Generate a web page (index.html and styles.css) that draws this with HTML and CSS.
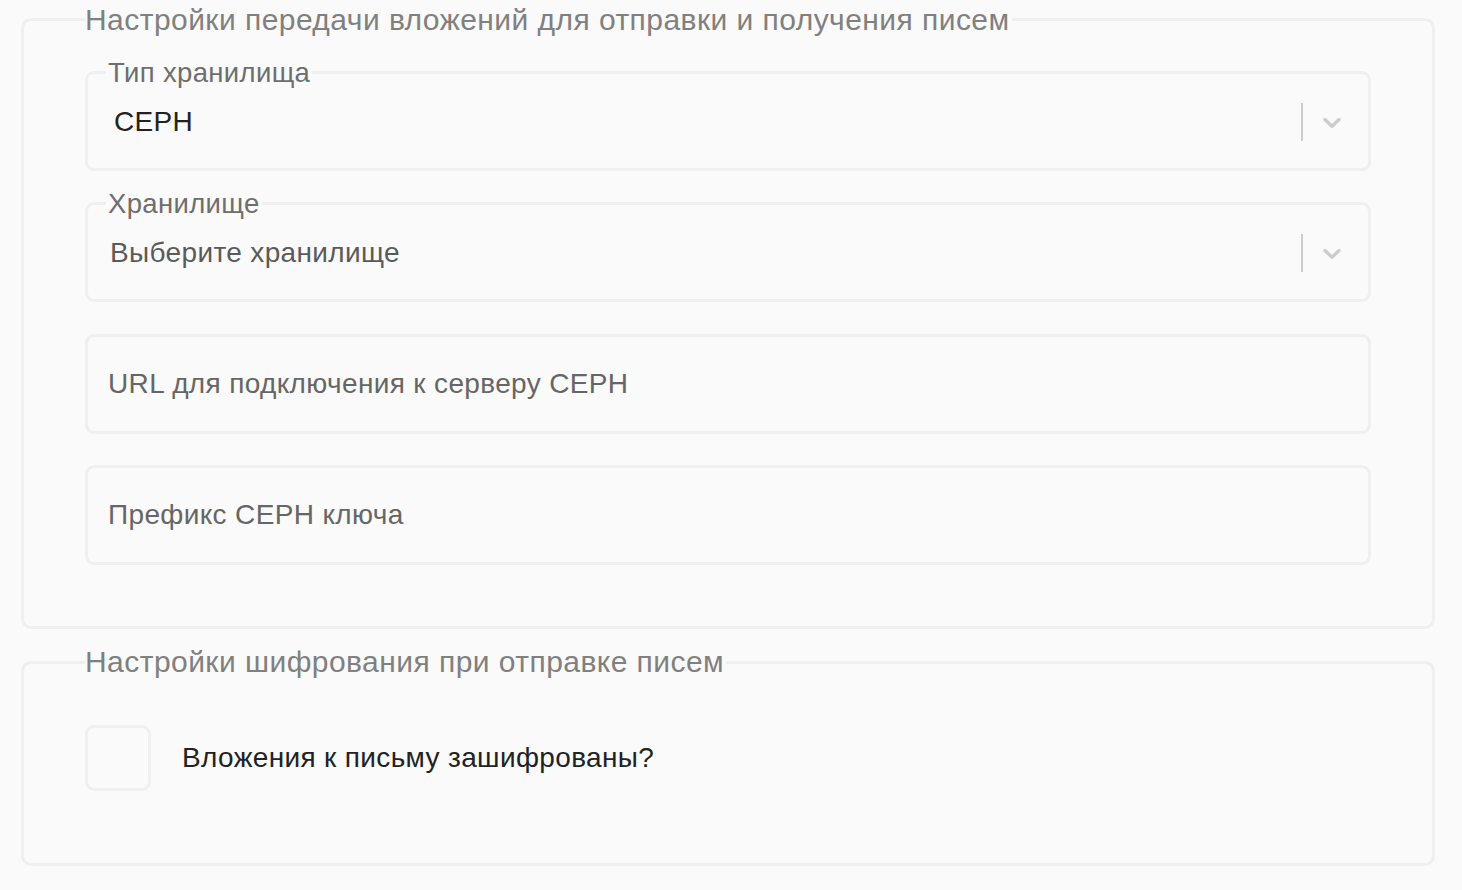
FILE: index.html
```html
<!DOCTYPE html>
<html lang="ru">
<head>
<meta charset="utf-8">
<title>Настройки</title>
<link rel="stylesheet" href="styles.css">
</head>
<body>
<div class="page">
  <section class="group group-attach">
    <span class="group-title">Настройки передачи вложений для отправки и получения писем</span>
    <div class="fields">
      <div class="field field-select">
        <span class="field-label">Тип хранилища</span>
        <span class="select-value">CEPH</span>
        <span class="indicators">
          <span class="sep"></span>
          <svg class="chevron" viewBox="0 0 20 20" width="30" height="30" aria-hidden="true"><path d="M4.516 7.548c0.436-0.446 1.043-0.481 1.576 0l3.908 3.747 3.908-3.747c0.533-0.481 1.141-0.446 1.574 0 0.436 0.445 0.408 1.197 0 1.615-0.406 0.418-4.695 4.502-4.695 4.502-0.217 0.223-0.502 0.335-0.787 0.335s-0.57-0.112-0.789-0.335c0 0-4.287-4.084-4.695-4.502s-0.436-1.170 0-1.615z"/></svg>
        </span>
      </div>
      <div class="field field-select">
        <span class="field-label">Хранилище</span>
        <span class="select-placeholder">Выберите хранилище</span>
        <span class="indicators">
          <span class="sep"></span>
          <svg class="chevron" viewBox="0 0 20 20" width="30" height="30" aria-hidden="true"><path d="M4.516 7.548c0.436-0.446 1.043-0.481 1.576 0l3.908 3.747 3.908-3.747c0.533-0.481 1.141-0.446 1.574 0 0.436 0.445 0.408 1.197 0 1.615-0.406 0.418-4.695 4.502-4.695 4.502-0.217 0.223-0.502 0.335-0.787 0.335s-0.57-0.112-0.789-0.335c0 0-4.287-4.084-4.695-4.502s-0.436-1.170 0-1.615z"/></svg>
        </span>
      </div>
      <div class="field">
        <span class="input-placeholder">URL для подключения к серверу CEPH</span>
      </div>
      <div class="field">
        <span class="input-placeholder">Префикс CEPH ключа</span>
      </div>
    </div>
  </section>

  <section class="group group-crypt">
    <span class="group-title">Настройки шифрования при отправке писем</span>
    <label class="check-row">
      <span class="checkbox"></span>
      <span class="check-text">Вложения к письму зашифрованы?</span>
    </label>
  </section>
</div>
</body>
</html>
```

FILE: styles.css
```css
html, body {
  margin: 0;
  padding: 0;
  background: #fafafa;
}

body {
  font-family: "Liberation Sans", Arial, Helvetica, sans-serif;
  color: #222;
}

.page {
  padding: 18px 27px 20px 21px;
  display: flex;
  flex-direction: column;
  gap: 32px;
}

.group {
  position: relative;
  border: 3px solid #efefef;
  border-radius: 10px;
  padding: 50px 61px 61px 61px;
}

.group-title {
  position: absolute;
  top: -17.5px;
  left: 61px;
  padding: 0 2px 0 0;
  background: #fafafa;
  font-size: 30px;
  letter-spacing: 0.45px;
  line-height: 32px;
  color: #808080;
  white-space: nowrap;
}

.fields {
  display: flex;
  flex-direction: column;
  gap: 31.33px;
}

.field {
  position: relative;
  height: 100px;
  box-sizing: border-box;
  border: 3px solid #efefef;
  border-radius: 9px;
  padding: 1px 21px 0 20px;
  display: flex;
  align-items: center;
  font-size: 28px;
  letter-spacing: 0.35px;
}

.field-label {
  position: absolute;
  top: -17.5px;
  left: 18px;
  padding: 0 2px;
  background: #fafafa;
  font-size: 27.5px;
  letter-spacing: 0.35px;
  line-height: 32px;
  color: #6e6e6e;
  white-space: nowrap;
}

.select-value {
  flex: 1;
  padding-left: 6px;
  color: #222;
}

.select-placeholder {
  flex: 1;
  padding-left: 2px;
  color: #5a5a5a;
}

.input-placeholder {
  color: #666;
}

.indicators {
  display: flex;
  align-items: center;
  gap: 14px;
}

.sep {
  width: 2px;
  height: 38px;
  background: #cccccc;
}

.chevron {
  display: block;
  fill: #cccccc;
}

.check-row {
  height: 88px;
  display: flex;
  align-items: center;
  gap: 31px;
}

.checkbox {
  width: 66px;
  height: 66px;
  box-sizing: border-box;
  border: 3px solid #efefef;
  border-radius: 9px;
  flex: none;
}

.check-text {
  font-size: 28px;
  letter-spacing: 0.35px;
  color: #222;
}
```
